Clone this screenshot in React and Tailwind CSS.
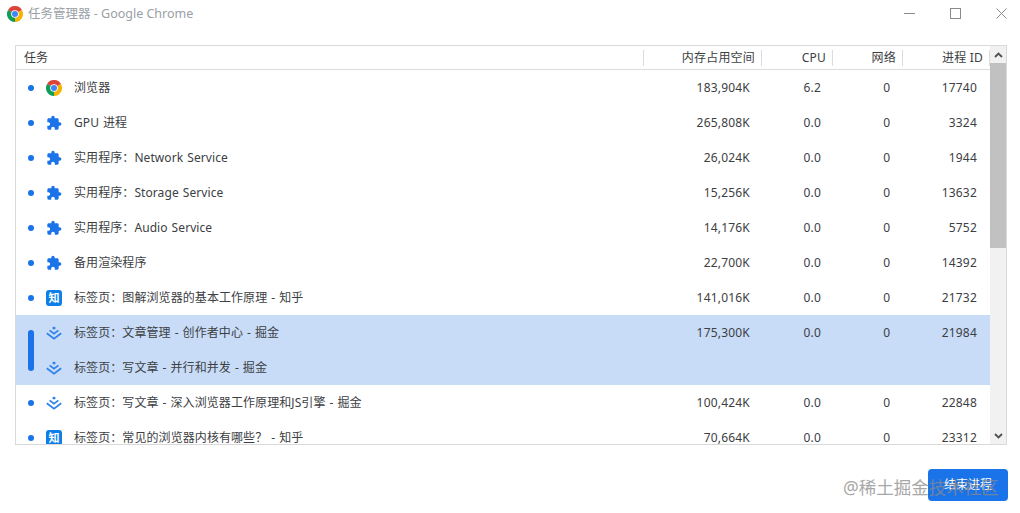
const rows = [
  { icon: "chrome", name: "浏览器", mem: "183,904K", cpu: "6.2", net: "0", pid: "17740" },
  { icon: "puzzle", name: "GPU 进程", mem: "265,808K", cpu: "0.0", net: "0", pid: "3324" },
  { icon: "puzzle", name: "实用程序：Network Service", mem: "26,024K", cpu: "0.0", net: "0", pid: "1944" },
  { icon: "puzzle", name: "实用程序：Storage Service", mem: "15,256K", cpu: "0.0", net: "0", pid: "13632" },
  { icon: "puzzle", name: "实用程序：Audio Service", mem: "14,176K", cpu: "0.0", net: "0", pid: "5752" },
  { icon: "puzzle", name: "备用渲染程序", mem: "22,700K", cpu: "0.0", net: "0", pid: "14392" },
  { icon: "zhihu", name: "标签页：图解浏览器的基本工作原理 - 知乎", mem: "141,016K", cpu: "0.0", net: "0", pid: "21732" },
];

const selected = [
  { icon: "juejin", name: "标签页：文章管理 - 创作者中心 - 掘金", mem: "175,300K", cpu: "0.0", net: "0", pid: "21984" },
  { icon: "juejin", name: "标签页：写文章 - 并行和并发 - 掘金", mem: "", cpu: "", net: "", pid: "" },
];

const after = [
  { icon: "juejin", name: "标签页：写文章 - 深入浏览器工作原理和JS引擎 - 掘金", mem: "100,424K", cpu: "0.0", net: "0", pid: "22848" },
  { icon: "zhihu", name: "标签页：常见的浏览器内核有哪些？ - 知乎", mem: "70,664K", cpu: "0.0", net: "0", pid: "23312" },
];

function ChromeIcon({ size = 16 }) {
  return (
    <svg width={size} height={size} viewBox="0 0 48 48">
      <path fill="#db4437" d="M24 24 3.200 12A24 24 0 0 1 44.800 12z" />
      <path fill="#f4b400" d="M24 24 44.800 12A24 24 0 0 1 24 48z" />
      <path fill="#0f9d58" d="M24 24 24 48A24 24 0 0 1 3.200 12z" />
      <circle cx="24" cy="24" r="11.500" fill="#fff" />
      <circle cx="24" cy="24" r="9" fill="#4285f4" />
    </svg>
  );
}

function PuzzleIcon() {
  return (
    <svg width="16" height="16" viewBox="0 0 24 24" fill="#1a73e8">
      <path d="M20.500 11H19V7c0-1.100-.9-2-2-2h-4V3.500C13 2.120 11.880 1 10.500 1S8 2.120 8 3.500V5H4c-1.100 0-1.990.9-1.990 2v3.800H3.500c1.490 0 2.700 1.210 2.700 2.700s-1.210 2.700-2.700 2.700H2V20c0 1.100.9 2 2 2h3.800v-1.500c0-1.490 1.210-2.700 2.700-2.700 1.490 0 2.700 1.210 2.700 2.700V22H17c1.100 0 2-.9 2-2v-4h1.500c1.380 0 2.500-1.120 2.500-2.500S21.880 11 20.500 11z" />
    </svg>
  );
}

function ZhihuIcon() {
  return (
    <div className="w-4 h-4 rounded-[3px] bg-[#0f7fe8] text-white text-[11px] leading-4 font-bold text-center">知</div>
  );
}

function JuejinIcon() {
  return (
    <svg width="16" height="14" viewBox="0 0 16 14" fill="none">
      <path d="M8 0.500 10 2.100 8 3.700 6 2.100z" fill="#2e82ec" />
      <path d="M3.600 4.300 8 7.700 12.400 4.300" stroke="#2e82ec" strokeWidth="1.700" />
      <path d="M0.800 7.300 8 12.800 15.200 7.300" stroke="#2e82ec" strokeWidth="1.700" />
    </svg>
  );
}

function RowIcon({ type }) {
  if (type === "chrome") return <ChromeIcon />;
  if (type === "puzzle") return <PuzzleIcon />;
  if (type === "zhihu") return <ZhihuIcon />;
  return <JuejinIcon />;
}

// everything right of the dot column
function RowBody({ row }) {
  return (
    <div className="flex-1 flex items-center h-[35px]">
      <div className="w-4 flex justify-center shrink-0">
        <RowIcon type={row.icon} />
      </div>
      <div className="ml-3 flex-1 truncate tracking-[0.08px] [word-spacing:0.8px]">{row.name}</div>
      <div className="w-[100px] text-right tracking-[0.2px]">{row.mem}</div>
      <div className="w-[71px] text-right tracking-[0.2px]">{row.cpu}</div>
      <div className="w-[69px] text-right">{row.net}</div>
      <div className="w-[87px] text-right mr-[13px] tracking-[0.2px]">{row.pid}</div>
    </div>
  );
}

function Row({ row }) {
  return (
    <div className="flex items-center">
      <div className="w-[30px] flex justify-center pr-[1px] shrink-0">
        <div className="w-[6px] h-[6px] rounded-full bg-[#1a73e8]" />
      </div>
      <RowBody row={row} />
    </div>
  );
}

function HeaderCell({ children, className }) {
  return (
    <div className={`flex items-center justify-end h-full ${className}`}>
      <span className="pr-[6px] tracking-[0.2px]">{children}</span>
      <div className="w-px h-[16px] bg-[#dadce0]" />
    </div>
  );
}

export default function App() {
  return (
    <div
      className="relative w-[1020px] h-[513px] overflow-hidden bg-white text-[12px] text-[#3c4043] flex flex-col"
      style={{ fontFamily: '"Noto Sans", "Noto Sans CJK SC", sans-serif' }}
    >
      {/* title bar */}
      <div className="h-[45px] flex items-start shrink-0">
        <div className="flex items-center h-[28px] pl-[7px]">
          <ChromeIcon size={16} />
          <span className="ml-[5px] text-[12.500px] text-[#9aa0a6]">任务管理器 - Google Chrome</span>
        </div>
        <div className="ml-auto flex items-center h-[26px] pr-[13px] gap-[35px]">
          <svg width="11" height="11" viewBox="0 0 11 11"><path d="M0 5.500H11" stroke="#8a8a8a" /></svg>
          <svg width="11" height="11" viewBox="0 0 11 11" fill="none"><rect x="0.500" y="0.500" width="10" height="10" stroke="#8a8a8a" /></svg>
          <svg width="11" height="11" viewBox="0 0 11 11" fill="none"><path d="M0.500 0.500 10.500 10.500M10.500 0.500 0.500 10.500" stroke="#8a8a8a" /></svg>
        </div>
      </div>

      {/* table */}
      <div className="ml-[15px] w-[992px] h-[400px] shrink-0 border border-[#d9d9d9] flex overflow-hidden">
        <div className="w-[974px] shrink-0">
          <div className="h-[24px] flex items-center border-b border-[#dadce0]">
            <div className="w-[628px] h-full flex items-center justify-between">
              <span className="pl-[8px]">任务</span>
              <div className="w-px h-[16px] bg-[#dadce0]" />
            </div>
            <HeaderCell className="w-[118px]">内存占用空间</HeaderCell>
            <HeaderCell className="w-[71px]">CPU</HeaderCell>
            <HeaderCell className="w-[70px]">网络</HeaderCell>
            <HeaderCell className="w-[87px]">进程 ID</HeaderCell>
          </div>
          <div>
            {rows.map((r) => <Row key={r.pid} row={r} />)}
            <div className="flex bg-[#c8dcf8]">
              <div className="w-[30px] flex justify-center items-center pr-[1px] shrink-0">
                <div className="w-[6px] h-[41px] rounded-full bg-[#1a73e8]" />
              </div>
              <div className="flex-1">
                {selected.map((r) => (
                  <div key={r.name} className="flex"><RowBody row={r} /></div>
                ))}
              </div>
            </div>
            {after.map((r) => <Row key={r.pid} row={r} />)}
          </div>
        </div>

        {/* scrollbar */}
        <div className="flex-1 bg-[#f1f1f1] flex flex-col items-center">
          <div className="h-[17px] w-full flex items-center justify-center">
            <svg width="9" height="6" viewBox="0 0 9 6" fill="none"><path d="M1 5 4.500 1.500 8 5" stroke="#505050" strokeWidth="1.800" /></svg>
          </div>
          <div className="w-full h-[185px] bg-[#c1c1c1]" />
          <div className="mt-auto h-[17px] w-full flex items-center justify-center">
            <svg width="9" height="6" viewBox="0 0 9 6" fill="none"><path d="M1 1 4.500 4.500 8 1" stroke="#505050" strokeWidth="1.800" /></svg>
          </div>
        </div>
      </div>

      {/* footer */}
      <div className="flex justify-end pr-[12px] pt-[24px]">
        <div className="w-[80px] h-[32px] rounded-[4px] bg-[#1a73e8] text-white flex items-center justify-center">结束进程</div>
      </div>

      {/* watermark */}
      <div className="absolute left-[843px] top-[475px] text-[17.500px] leading-6 text-[#8a8a8a] opacity-75 whitespace-nowrap">@稀土掘金技术社区</div>
    </div>
  );
}
